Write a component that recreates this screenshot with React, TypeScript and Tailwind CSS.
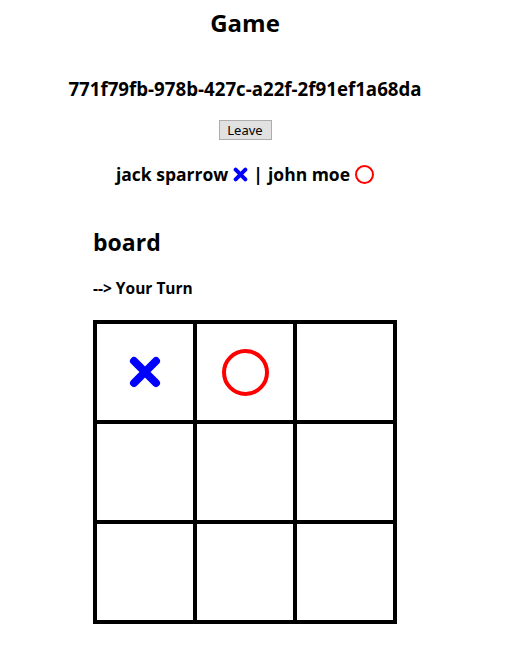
import React from 'react';

type Mark = 'x' | 'o' | null;

const board: Mark[] = ['x', 'o', null, null, null, null, null, null, null];

function XMark({ size, stroke }: { size: number; stroke: number }) {
  return (
    <svg width={size} height={size} viewBox="0 0 34 34" className="inline-block">
      <path d="M6 6 L28 28 M28 6 L6 28" stroke="#0000ff" strokeWidth={stroke} strokeLinecap="round" fill="none" />
    </svg>
  );
}

function OMark({ size, stroke }: { size: number; stroke: number }) {
  const r = (size - stroke) / 2;
  return (
    <svg width={size} height={size} viewBox={`0 0 ${size} ${size}`} className="inline-block">
      <circle cx={size / 2} cy={size / 2} r={r} stroke="#ff0000" strokeWidth={stroke} fill="none" />
    </svg>
  );
}

export default function App() {
  return (
    <div className="w-[490px] bg-white text-black" style={{ fontFamily: '"Open Sans", "Noto Sans", sans-serif' }}>
      <h2 className="pt-[7px] text-center text-[24px] leading-[32px] font-bold">Game</h2>

      <h3 className="mt-[38px] text-center text-[18.7px] leading-[24px] font-bold">
        771f79fb-978b-427c-a22f-2f91ef1a68da
      </h3>

      <div className="mt-[19px] flex justify-center">
        <button className="h-[20px] w-[53px] border border-[#adadad] bg-[#e1e1e1] text-[13px] leading-[18px]" style={{ fontFamily: '"Noto Sans", sans-serif' }}>
          Leave
        </button>
      </div>

      <h3 className="mt-[22px] flex items-center justify-center gap-[5px] text-[17.5px] leading-[24px] font-bold">
        <span>jack sparrow</span>
        <XMark size={15} stroke={9} />
        <span>|</span>
        <span>john moe</span>
        <OMark size={19} stroke={2} />
      </h3>

      <div className="mt-[40px] pl-[93px]">
        <h2 className="text-[23px] leading-[32px] font-bold">board</h2>
        <h4 className="mt-[20px] text-[15.5px] leading-[20px] font-bold">--&gt; Your Turn</h4>

        <div className="mt-[22px] grid w-[304px] grid-cols-3 border-2 border-black">
          {board.map((cell, i) => (
            <div key={i} className="flex h-[100px] w-[100px] items-center justify-center border-2 border-black">
              {cell === 'x' && <XMark size={34} stroke={8} />}
              {cell === 'o' && <OMark size={47} stroke={4} />}
            </div>
          ))}
        </div>
      </div>
    </div>
  );
}
